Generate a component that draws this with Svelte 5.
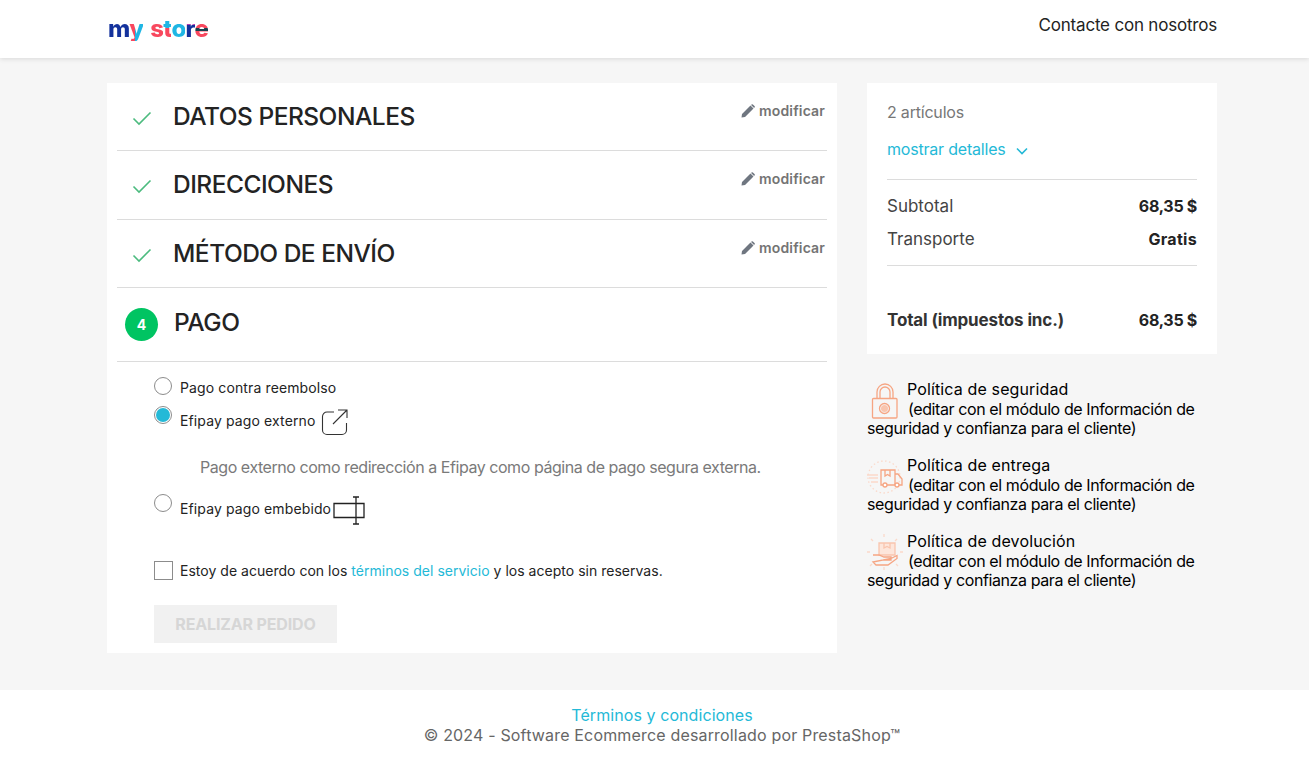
<script>
  const steps = [
    { title: 'DATOS PERSONALES' },
    { title: 'DIRECCIONES' },
    { title: 'MÉTODO DE ENVÍO' }
  ];
  const policies = [
    { title: 'Política de seguridad', icon: 'lock' },
    { title: 'Política de entrega', icon: 'truck' },
    { title: 'Política de devolución', icon: 'hand' }
  ];
</script>

<div class="page">
  <header class="top">
    <div class="wrap top-in">
      <div class="logo" aria-label="my store"><span class="m">m</span><span class="y">y</span><span class="gap"></span><span class="s">s</span><span class="t">t</span><span class="o">o</span><span class="r">r</span><span class="e">e</span></div>
      <a class="contact" href="#c">Contacte con nosotros</a>
    </div>
  </header>

  <main class="wrap columns">
    <section class="card">
      {#each steps as s}
        <div class="step">
          <svg class="check" viewBox="0 0 20 16" width="20" height="16"><path d="M1.500 8.500 L7 14 L18.500 2.500" fill="none" stroke="#4cbb7f" stroke-width="1.600"/></svg>
          <h1>{s.title}</h1>
          <a class="edit" href="#e">
            <svg viewBox="0 0 14 14" width="14" height="14"><path d="M0.500 13.500 L1 10 L9.500 1.500 L12.500 4.500 L4 13 Z M10.500 0.500 a1 1 0 0 1 1.400 0 l1.600 1.600 a1 1 0 0 1 0 1.400 l-0.400 0.400 -3-3z" fill="#6f7680"/></svg>
            modificar
          </a>
        </div>
      {/each}
      <div class="step current">
        <span class="num">4</span>
        <h1>PAGO</h1>
      </div>
      <div class="pay">
        <div class="opt o1"><span class="radio"></span><span>Pago contra reembolso</span></div>
        <div class="opt o2"><span class="radio on"></span><span>Efipay pago externo</span>
          <svg class="ext" viewBox="0 0 28 28" width="28" height="28"><path d="M13 4 H6 a4.500 4.500 0 0 0 -4.500 4.500 V22 a4.500 4.500 0 0 0 4.500 4.500 H21 a4.500 4.500 0 0 0 4.500 -4.500 V15 M12 16 L26 2 M17 2 H26 V10" fill="none" stroke="#333" stroke-width="1.100"/></svg>
        </div>
        <p class="desc">Pago externo como redirección a Efipay como página de pago segura externa.</p>
        <div class="opt o3"><span class="radio"></span><span>Efipay pago embebido</span>
          <svg class="emb" viewBox="0 0 32 30" width="32" height="30"><path d="M1 7.500 H31 V21.500 H1 Z M23 1 V28 M20 1 H26 M20 28 H26" fill="none" stroke="#222" stroke-width="1.300"/></svg>
        </div>
        <div class="terms"><span class="box"></span><span>Estoy de acuerdo con los <a href="#t">términos del servicio</a> y los acepto sin reservas.</span></div>
        <button class="order" disabled>REALIZAR PEDIDO</button>
      </div>
    </section>

    <aside class="side">
      <div class="summary">
        <div class="count">2 artículos</div>
        <a class="details" href="#d">mostrar detalles
          <svg viewBox="0 0 12 8" width="12" height="8"><path d="M1 1.500 L6 6.500 L11 1.500" fill="none" stroke="#24b9d7" stroke-width="1.600"/></svg>
        </a>
        <div class="lines">
          <div class="line"><span>Subtotal</span><b>68,35 $</b></div>
          <div class="line"><span>Transporte</span><b class="free">Gratis</b></div>
        </div>
        <div class="total"><span>Total (impuestos inc.)</span><b>68,35 $</b></div>
      </div>
      <div class="policies">
        {#each policies as p}
          <div class="policy">
            <svg class="pi" viewBox="0 0 40 40" width="40" height="40" fill="none" stroke="#f6a583" stroke-width="1.300">
              {#if p.icon === 'lock'}
                <path d="M10 16 V10 a7.500 7.500 0 0 1 16 0 V16 M13 16 V10 a5 5 0 0 1 10 0 V16"/>
                <rect x="5.500" y="16.500" width="24.500" height="19.500" rx="1"/>
                <circle cx="17.500" cy="26.500" r="5"/>
                <circle cx="17.500" cy="26.500" r="3.500" fill="#f9c5ae" stroke="none"/>
              {:else if p.icon === 'truck'}
                <circle cx="17" cy="19" r="16" stroke="#fbd9ca" stroke-dasharray="1.500 2.500"/>
                <path d="M14 12 H28 V27 H14 Z M28 16 H31 L35 21 V27 H28 M18 12 V18 L20.500 16.500 L23 18 V12"/>
                <circle cx="18" cy="27" r="2" fill="#fff"/><circle cx="30" cy="27" r="2" fill="#fff"/>
                <path d="M0 17 H11 M2 20 H11 M4 24 H11" stroke="#fbd9ca"/>
              {:else}
                <path d="M12 9 H28 V21 H12 Z" fill="#fde6db" stroke="#f9c5ae"/>
                <path d="M17 9 V14 L20 12.500 L23 14 V9" stroke="#f9c5ae"/>
                <path d="M6 21 H12 L17 23 H24 V26 H16 M24 24.500 L30 21.500 V24.500 L21 31 H9 L6 28 Z"/>
                <path d="M17 0 V3 M4 5 L6 7 M30 5 L28 7 M0 18 H3 M33 18 H36 M17 33 V36 M5 30 L3 32 M29 30 L31 32" stroke="#fbd9ca"/>
              {/if}
            </svg>
            <span class="ptitle">{p.title}</span><br />
            <span class="pdesc">(editar con el módulo de Información de seguridad y confianza para el cliente)</span>
          </div>
        {/each}
      </div>
    </aside>
  </main>

  <footer class="foot">
    <a href="#x">Términos y condiciones</a>
    <div class="copy">© 2024 - Software Ecommerce desarrollado por PrestaShop™</div>
  </footer>
</div>

<style>
  :global(body) { margin: 0; background: #f6f6f6; font-family: Inter, "Noto Sans", sans-serif; color: #232323; }
  a { text-decoration: none; color: #24b9d7; }
  .page { height: 760px; overflow: hidden; display: flex; flex-direction: column; }
  .wrap { width: 1110px; margin-left: 107px; }
  .top { height: 58px; background: #fff; box-shadow: 0 1px 5px rgba(0,0,0,.12); flex: none; }
  .top-in { display: flex; justify-content: space-between; align-items: center; height: 50px; }
  .logo { font-weight: 800; font-size: 24px; letter-spacing: -.9px; line-height: 1; display: flex; align-items: baseline; padding: 8px 0 0 1px; }
  .logo span { background-clip: text; -webkit-background-clip: text; color: transparent; }
  .logo .m { background-image: linear-gradient(180deg, #e0409c 0 22%, #14329c 22%); }
  .logo .y { background-image: linear-gradient(90deg, #f8485e 0 45%, #1fb6e4 45%); }
  .logo .gap { width: 7px; }
  .logo .s { background-image: linear-gradient(#f8485e, #f8485e); }
  .logo .t { background-image: linear-gradient(180deg, #1fb6e4 0 45%, #f8485e 45%); }
  .logo .o { background-image: linear-gradient(#1fb6e4, #1fb6e4); }
  .logo .r { background-image: linear-gradient(180deg, #b43ab0 0 35%, #14329c 35%); }
  .logo .e { background-image: linear-gradient(180deg, #f8485e 0 45%, #17404e 45% 60%, #f8485e 60%); }
  .contact { color: #232323; font-size: 17px; letter-spacing: -.2px; }
  .columns { display: flex; gap: 30px; padding-top: 25px; flex: none; height: 632px; box-sizing: border-box; }
  .card { width: 730px; height: 570px; background: #fff; padding: 0 10px; box-sizing: border-box; }
  .step { position: relative; display: flex; align-items: center; height: 68px; border-bottom: 1px solid #dcdcdc; padding-left: 15px; }
  .step:first-child { height: 67px; }
  .step:nth-child(3) { height: 67px; }
  .step.current { height: 73px; padding-left: 8px; }
  .check { margin: 2px 21px 0 0; }
  .num { width: 33px; height: 33px; border-radius: 50%; background: #00c462; color: #fff; font-weight: 700; font-size: 14px; display: flex; align-items: center; justify-content: center; margin: 0 16px 0 0; }
  h1 { margin: 0 0 2px; font-size: 24.5px; font-weight: 500; letter-spacing: -.5px; color: #232323; }
  .current h1 { margin-bottom: 5px; }
  .current .num { margin-top: -1px; }
  .edit { position: absolute; right: 2px; top: 19px; color: #747474; font-size: 14px; font-weight: 600; letter-spacing: .15px; display: flex; align-items: center; gap: 4px; }
  .pay { padding: 15px 0 0 37px; }
  .opt { display: flex; align-items: center; font-size: 14px; letter-spacing: .12px; color: #232323; position: relative; }
  .radio { width: 16px; height: 16px; border: 1px solid #8c8c8c; border-radius: 50%; margin-right: 8px; position: relative; background: #fff; flex: none; }
  .radio.on::after { content: ""; position: absolute; inset: 1px; border-radius: 50%; background: #24b9d7; }
  .o1 { height: 20px; }
  .o1 .radio { margin-top: -2px; }
  .o2 { height: 28px; margin-top: 9px; }
  .o2 .radio { margin-top: -11px; }
  .o3 .radio { margin-top: -11px; }
  .ext { margin: 3px 0 0 6px; }
  .desc { margin: 22px 0 0 46px; font-size: 16px; letter-spacing: -.45px; color: #7a7a7a; line-height: 22px; }
  .o3 { height: 30px; margin-top: 15px; }
  .emb { margin: 6px 0 0 2px; }
  .terms { display: flex; align-items: center; font-size: 14px; letter-spacing: .02px; margin-top: 37px; height: 20px; }
  .box { width: 17px; height: 17px; border: 1px solid #8c8c8c; margin-right: 7px; flex: none; }
  .order { display: block; margin-top: 25px; width: 183px; height: 38px; border: 0; background: #f1f1f1; color: #d6d6d6; font: 700 16px Inter, sans-serif; letter-spacing: -.15px; }
  .side { width: 350px; }
  .summary { background: #fff; height: 271px; box-sizing: border-box; padding: 19px 20px 0; font-size: 16px; letter-spacing: -.2px; }
  .count { color: #777; line-height: 20px; }
  .details { display: block; margin-top: 17px; line-height: 20px; }
  .details svg { margin-left: 6px; }
  .lines { margin-top: 20px; border-top: 1px solid #dcdcdc; border-bottom: 1px solid #dcdcdc; padding-top: 16px; height: 69px; font-size: 17px; }
  .line { display: flex; justify-content: space-between; align-items: center; line-height: 20px; margin-bottom: 13px; color: #444; letter-spacing: 0; }
  .line b, .total b { color: #232323; font-weight: 700; font-size: 16px; letter-spacing: -.3px; }
  .line .free { letter-spacing: .3px; }
  .total { display: flex; justify-content: space-between; align-items: center; margin-top: 44px; font-weight: 700; color: #333; line-height: 20px; font-size: 17px; letter-spacing: -.14px; }
  .policies { padding-top: 26px; }
  .policy { font-size: 16px; line-height: 19.5px; color: #000; margin-bottom: 17.5px; letter-spacing: -.4px; }
  .ptitle { letter-spacing: .13px; }
  .pi { float: left; margin: 2px 0 -10px 0; }
  .pdesc { margin-left: 1px; }
  .foot { background: #fff; height: 70px; flex: none; text-align: center; box-sizing: border-box; padding: 15px 0 0 15px; font-size: 16px; line-height: 20px; color: #666; letter-spacing: .08px; }
  .copy { letter-spacing: .17px; }
</style>
